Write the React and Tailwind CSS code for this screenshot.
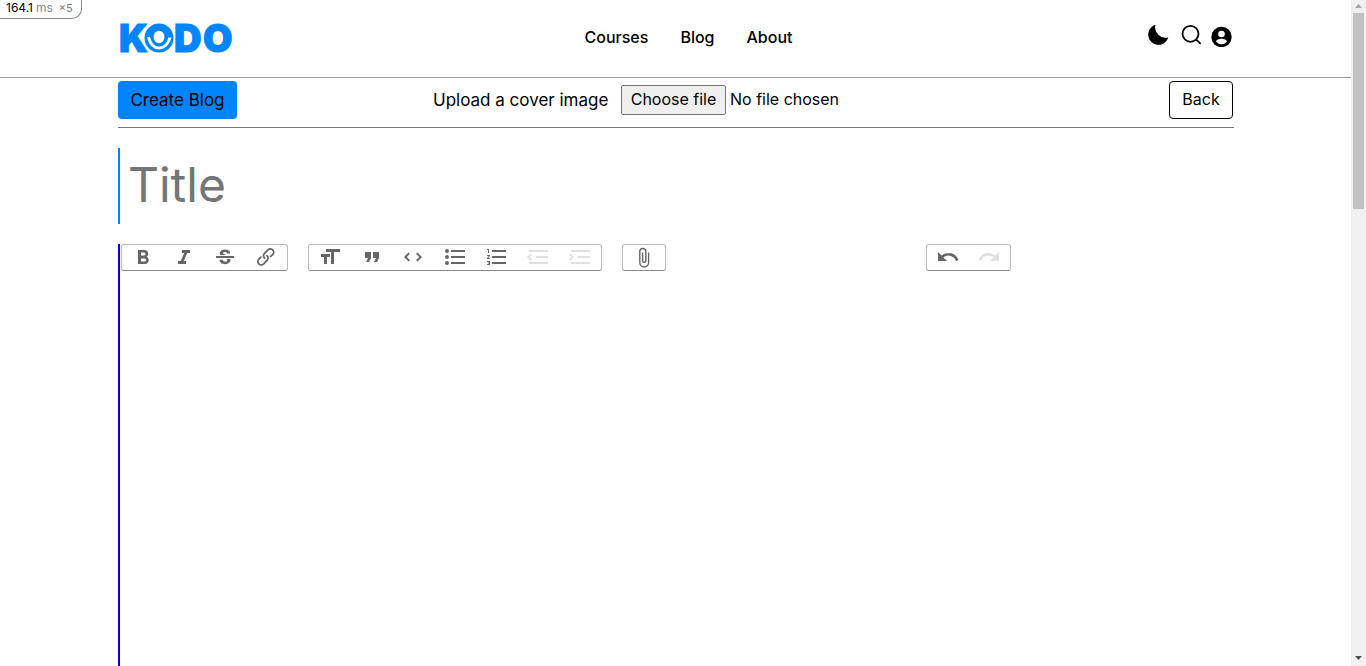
import React from "react";

function Icon({ children }) {
  return (
    <svg viewBox="0 0 24 24" className="h-6 w-6 shrink-0" fill="currentColor" aria-hidden="true">
      {children}
    </svg>
  );
}

const textTools = [
  { label: "Bold", d: "M15.6 11.8c1-.7 1.6-1.8 1.6-2.8a4 4 0 0 0-4-4H7v14h7c2.1 0 3.7-1.7 3.7-3.8 0-1.5-.8-2.8-2.1-3.4zM10 7.5h3a1.5 1.5 0 1 1 0 3h-3v-3zm3.5 9H10v-3h3.5a1.5 1.5 0 1 1 0 3z" },
  { label: "Italic", d: "M10 5v3h2.2l-3.4 8H6v3h8v-3h-2.2l3.4-8H18V5h-8z" },
  { label: "Strikethrough", d: "M12.7 11H3v2h18v-2h-8.3zM7.2 10c-.3-.5-.5-1.1-.5-1.8C6.7 5.9 9 4.500 12 4.500c3.100 0 5.200 1.500 5.300 4h-3.200c-.1-1-.8-1.500-2.100-1.500-1.200 0-1.900.4-1.900 1.100 0 .8.8 1.200 2.500 1.600l1 .3H7.200zM13.300 14h4c.1.3.2.7.2 1.100 0 2.600-2.200 4.100-5.400 4.100-3.300 0-5.600-1.600-5.600-4.400h3.200c.2 1.200 1 1.800 2.500 1.800 1.300 0 2-.4 2-1.200 0-.6-.3-1-.9-1.400z" },
  { label: "Link", d: "M9.88 13.7a4.3 4.3 0 0 1 0-6.07l3.37-3.37a4.26 4.26 0 0 1 6.07 0 4.3 4.3 0 0 1 0 6.06l-1.96 1.72a.91.91 0 1 1-1.3-1.3l1.97-1.71a2.46 2.46 0 0 0-3.48-3.48l-3.38 3.37a2.46 2.46 0 0 0 0 3.48.91.91 0 1 1-1.3 1.3zM4.25 19.46a4.3 4.3 0 0 1 0-6.07l1.93-1.9a.91.91 0 1 1 1.3 1.3l-1.93 1.9a2.46 2.46 0 0 0 3.48 3.48l3.37-3.38c.96-.96.96-2.52 0-3.48a.91.91 0 1 1 1.3-1.3 4.3 4.3 0 0 1 0 6.07l-3.38 3.38a4.26 4.26 0 0 1-6.07 0z" },
];

const blockTools = [
  { label: "Heading", d: "M12 9v3H9v7H6v-7H3V9h9zM8 4h14v3h-6v12h-3V7H8V4z" },
  { label: "Quote", d: "M6 17h3l2-4V7H5v6h3l-2 4zm8 0h3l2-4V7h-6v6h3l-2 4z" },
  { label: "Code", d: "M18.2 12l-3.1 3.2 1.4 1.4L21 12l-4.600-4.600-1.400 1.400 3.200 3.200zM5.800 12l3.100-3.200-1.400-1.400L3 12l4.600 4.600 1.400-1.400L5.800 12z" },
  { label: "Bullets", d: "M4 4a2 2 0 1 0 0 4 2 2 0 0 0 0-4zm0 6a2 2 0 1 0 0 4 2 2 0 0 0 0-4zm0 6a2 2 0 1 0 0 4 2 2 0 0 0 0-4zm4 3h14v-2H8v2zm0-6h14v-2H8v2zm0-8v2h14V5H8z" },
  { label: "Numbers", d: "M2 17h2v.5H3v1h1v.5H2v1h3v-4H2v1zm1-9h1V4H2v1h1v3zm-1 3h1.800L2 13.100v.9h3v-1H3.200L5 10.900V10H2v1zm5-6v2h14V5H7zm0 14h14v-2H7v2zm0-6h14v-2H7v2z" },
  { label: "Decrease level", disabled: true, d: "M3 19h19v-2H3v2zm7-6h12v-2H10v2zm-8.300-.3l2.800 2.900L6 14.200 4 12l2-2-1.400-1.500L1 12l.7.7zM3 5v2h19V5H3z" },
  { label: "Increase level", disabled: true, d: "M3 19h19v-2H3v2zm7-6h12v-2H10v2zm-6.900-1L1 14.200l1.400 1.400L6 12l-.7-.7-2.800-2.800L1 9.900 3.100 12zM3 5v2h19V5H3z" },
];

const fileTools = [
  { label: "Attach files", d: "M15.900 7.500v10.100a3.700 3.700 0 1 1-7.400 0V6.500a2.300 2.300 0 0 1 4.600 0v9.200a.9.9 0 1 1-1.800 0V7.500H9.900v8.200a2.300 2.300 0 0 0 4.600 0V6.500a3.700 3.700 0 1 0-7.400 0v11.100a5.100 5.100 0 0 0 10.200 0V7.500h-1.400z" },
];

const historyTools = [
  { label: "Undo", d: "M12.5 8c-2.600 0-5 1-6.900 2.600L2 7v9h9l-3.600-3.600A8 8 0 0 1 20 16l2.400-.8a10.500 10.500 0 0 0-10-7.200z" },
  { label: "Redo", disabled: true, d: "M18.4 10.6a10.500 10.500 0 0 0-16.900 4.600L4 16a8 8 0 0 1 12.700-3.600L13 16h9V7l-3.600 3.600z" },
];

function ToolGroup({ tools, className = "" }) {
  return (
    <div className={`flex h-[27px] rounded-[3px] border border-[#bbb] border-b-[#888] ${className}`}>
      {tools.map((tool) => (
        <button
          key={tool.label}
          type="button"
          aria-label={tool.label}
          disabled={tool.disabled}
          className="flex h-6 min-w-0 flex-1 items-center justify-center text-[#666] disabled:text-[#e0e0e0]"
        >
          <Icon>
            <path d={tool.d} />
          </Icon>
        </button>
      ))}
    </div>
  );
}

function Logo() {
  return (
    <a
      href="#home"
      aria-label="Kodo"
      className="flex h-[30px] w-[116px] items-center text-[38px] leading-none font-black text-[#0084ff] [-webkit-text-stroke:1px_#0084ff]"
    >
      <span aria-hidden="true" className="w-[25px]">K</span>
      <svg viewBox="0 0 30 30" className="relative h-[30px] w-[30px] shrink-0 overflow-visible" aria-hidden="true">
        <circle cx="15" cy="15" r="15.800" fill="#fff" />
        <circle cx="15" cy="15" r="14.500" fill="#0084ff" />
        <ellipse cx="15" cy="14" rx="5.400" ry="6.200" fill="#fff" />
        <path d="M4.500 14C6 20.500 9.500 25 15 25S24.500 20.500 26 14.500" fill="none" stroke="#fff" strokeWidth="3" />
      </svg>
      <span aria-hidden="true" className="relative w-[29px]">D</span>
      <span aria-hidden="true">O</span>
    </a>
  );
}

function Header() {
  return (
    <header className="flex h-[78px] shrink-0 items-start justify-between border-b border-[#999] pr-[117px] pl-[119px]">
      <div className="pt-[23px]">
        <Logo />
      </div>
      <nav className="flex gap-8 pt-[25px] pr-1 text-[16px] leading-6 font-medium">
        <a href="#courses">Courses</a>
        <a href="#blog">Blog</a>
        <a href="#about">About</a>
      </nav>
      <div className="flex items-center gap-2 pt-[23px]">
        <button type="button" aria-label="Dark mode">
          <svg viewBox="0 0 24 24" className="h-6 w-6" fill="currentColor">
            <path d="M9.500 1.800a10.200 10.200 0 1 0 12.800 12.400A10.200 10.200 0 0 1 9.500 1.800z" />
          </svg>
        </button>
        <button type="button" aria-label="Search">
          <svg viewBox="0 0 24 24" className="h-6 w-6" fill="none" stroke="currentColor" strokeWidth="1.800">
            <circle cx="12.500" cy="10.800" r="8" />
            <path d="M18.300 16.600l4.400 4.200" />
          </svg>
        </button>
        <button type="button" aria-label="Account">
          <svg viewBox="0 0 24 24" className="h-6 w-6">
            <circle cx="11.500" cy="14" r="10.200" fill="currentColor" />
            <circle cx="11.500" cy="11" r="3.300" fill="#fff" />
            <path d="M6 18.600c0-1.900 3-2.900 5.500-2.900s5.500 1 5.500 2.900a7 7 0 0 1-11 0z" fill="#fff" />
          </svg>
        </button>
      </div>
    </header>
  );
}

function Scrollbar() {
  return (
    <div aria-hidden="true" className="flex w-[15px] shrink-0 flex-col items-center bg-[#f1f1f1]">
      <svg viewBox="0 0 15 13" className="h-[13px] w-[15px]" fill="#a3a3a3">
        <path d="M4 8h7L7.500 4z" />
      </svg>
      <div className="h-[196px] w-[11px] bg-[#c1c1c1]" />
      <svg viewBox="0 0 15 15" className="mt-auto h-[15px] w-[15px]" fill="#505050">
        <path d="M4 5h7L7.500 9z" />
      </svg>
    </div>
  );
}

export default function App() {
  return (
    <div className="relative flex h-screen overflow-hidden bg-white font-['Inter',sans-serif] text-black">
      <div className="absolute top-0 left-0 flex h-[19px] w-[82px] items-center rounded-br-[10px] border-r border-b border-[#888] bg-white pb-[2px] pl-[6px] text-[12px] leading-4 whitespace-nowrap">
        <span>164.1</span>
        <span className="ml-[3px] text-[#888]">ms</span>
        <span className="ml-[6px] text-[11px] text-[#777]">×5</span>
      </div>

      <div className="flex min-w-0 flex-1 flex-col">
        <Header />
        <main className="flex min-h-0 flex-1 flex-col pr-[117px] pl-[118px]">
          <form className="flex min-h-0 flex-1 flex-col" onSubmit={(e) => e.preventDefault()}>
            <div className="flex h-[50px] shrink-0 items-start justify-between border-b border-[#777] pt-[3px] pr-px text-[16px] leading-6">
              <button type="submit" className="h-[38px] w-[119px] rounded-[4px] bg-[#0084ff] text-[17px]">
                Create Blog
              </button>
              <div className="flex h-[38px] w-[540px] items-center">
                <label htmlFor="cover" className="w-[188px] text-[17px]">
                  Upload a cover image
                </label>
                <label className="flex h-[30px] w-[105px] items-center justify-center rounded-[2px] border border-[#767676] bg-[#efefef] pb-[2px]">
                  Choose file
                  <input id="cover" type="file" className="sr-only" />
                </label>
                <span className="ml-1 pb-[2px]">No file chosen</span>
              </div>
              <button type="button" className="h-[38px] w-16 rounded-[4px] border border-black pb-[2px]">
                Back
              </button>
            </div>
            <input
              type="text"
              aria-label="Title"
              placeholder="Title"
              className="mt-5 h-[76px] w-full shrink-0 border-l-2 border-[#0084ff] pb-1 pl-2 text-[48px] outline-none placeholder:text-[#757575]"
            />
            <div className="mt-5 flex min-h-0 flex-1 flex-col border-l-2 border-[#00e]">
              <div role="toolbar" aria-label="Formatting" className="flex w-4/5 gap-5 pl-px">
                <ToolGroup tools={textTools} className="w-[167px]" />
                <ToolGroup tools={blockTools} className="w-[294px]" />
                <ToolGroup tools={fileTools} className="w-11" />
                <ToolGroup tools={historyTools} className="ml-auto w-[85px]" />
              </div>
              <textarea aria-label="Content" className="w-full flex-1 resize-none p-2 outline-none" />
            </div>
          </form>
        </main>
      </div>
      <Scrollbar />
    </div>
  );
}
